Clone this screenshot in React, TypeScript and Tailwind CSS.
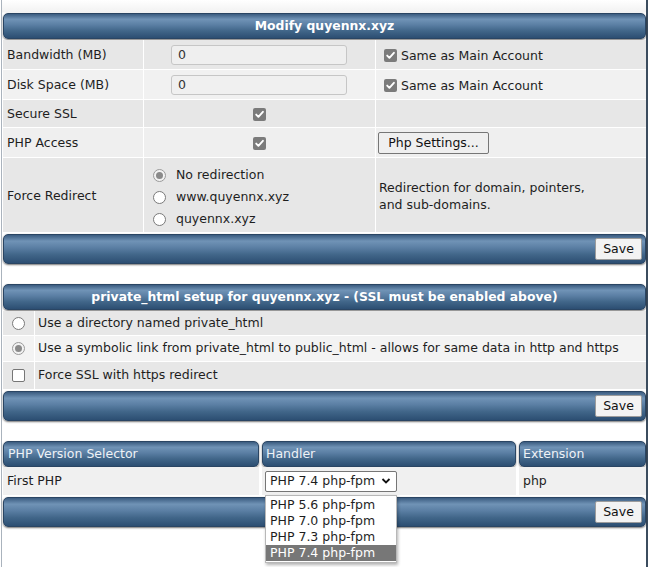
import React from "react";

const bar =
  "rounded-[5px] border border-[#2a4563] bg-[linear-gradient(to_bottom,#3b5c80_0%,#7093b6_22%,#5b7fa4_45%,#416689_70%,#2c4e72_100%)] shadow-[0_1px_2px_rgba(0,0,0,0.55)]";

function Check({ checked = true }: { checked?: boolean }) {
  if (!checked)
    return <span className="inline-block w-[13px] h-[13px] rounded-[2px] border border-[#767676] bg-white shrink-0" />;
  return (
    <span className="inline-flex w-[13px] h-[13px] rounded-[2px] bg-[#7b7b7b] items-center justify-center shrink-0">
      <svg width="11" height="11" viewBox="0 0 11 11">
        <path d="M2.2 5.6 L4.4 7.8 L8.9 2.8" fill="none" stroke="white" strokeWidth="1.9" strokeLinecap="round" strokeLinejoin="round" />
      </svg>
    </span>
  );
}

function Radio({ checked = false }: { checked?: boolean }) {
  if (checked)
    return (
      <span className="inline-flex w-[13px] h-[13px] rounded-full border border-[#9a9a9a] bg-[#f2f2f2] items-center justify-center shrink-0">
        <span className="w-[7px] h-[7px] rounded-full bg-[#8a8a8a]" />
      </span>
    );
  return <span className="inline-block w-[13px] h-[13px] rounded-full border border-[#7a7a7a] bg-white shrink-0" />;
}

function SaveBar() {
  return (
    <div className={`${bar} h-[30px] flex items-center justify-end pr-[3px]`}>
      <button className="h-[22px] w-[47px] bg-[#f3f3f3] border border-[#9c9c9c] rounded-[2px] text-[12.5px] text-[#111] leading-none">
        Save
      </button>
    </div>
  );
}

export default function App() {
  return (
    <div className="w-[648px] h-[567px] overflow-hidden bg-white pl-px font-['DejaVu_Sans',Verdana,sans-serif] text-[12.5px] text-[#1e1e1e]">
      <div className="h-full border-l border-[#aab3bd] border-r-2 border-r-[#3b4c5e] pl-px bg-[linear-gradient(to_bottom,#ffffff_0px,#f2f2f2_12px,#ffffff_13px)]">
        <div className="pt-[13px]">
          {/* Section 1 */}
          <div className={`${bar} h-[26px] flex items-center justify-center text-white font-bold text-[12.4px]`}>Modify quyennx.xyz</div>
          <div className="mt-px grid grid-cols-[140px_231px_1fr] gap-px bg-white">
            <div className="bg-[#e7e7e7] h-[29px] flex items-center pl-[4px] pt-[2px]">Bandwidth (MB)</div>
            <div className="bg-[#e7e7e7] flex items-center pl-[27px] pt-px">
              <div className="w-[176px] h-[20px] border border-[#c6c6c6] rounded-[3px] bg-[#efefef] flex items-center pl-[6px] text-[#333]">0</div>
            </div>
            <div className="bg-[#e7e7e7] flex items-center pl-[8px] gap-[4px] pt-[2px]">
              <Check />
              <span className="pt-[2px]">Same as Main Account</span>
            </div>

            <div className="bg-[#f1f1f1] h-[29px] flex items-center pl-[4px] pt-[2px]">Disk Space (MB)</div>
            <div className="bg-[#f1f1f1] flex items-center pl-[27px] pt-px">
              <div className="w-[176px] h-[20px] border border-[#c6c6c6] rounded-[3px] bg-[#f0f0f0] flex items-center pl-[6px] text-[#333]">0</div>
            </div>
            <div className="bg-[#f1f1f1] flex items-center pl-[8px] gap-[4px] pt-[2px]">
              <Check />
              <span className="pt-[2px]">Same as Main Account</span>
            </div>

            <div className="bg-[#e7e7e7] h-[27px] flex items-center pl-[4px] pt-[2px]">Secure SSL</div>
            <div className="bg-[#e7e7e7] flex items-center justify-center pt-[2px]">
              <Check />
            </div>
            <div className="bg-[#e7e7e7]" />

            <div className="bg-[#efefef] h-[29px] flex items-center pl-[4px] pt-[2px]">PHP Access</div>
            <div className="bg-[#efefef] flex items-center justify-center pt-[2px]">
              <Check />
            </div>
            <div className="bg-[#efefef] flex items-center pl-[2px] pt-px">
              <button className="h-[22px] w-[111px] bg-[#efefef] border border-[#767676] rounded-[2px] text-[12.5px] text-[#111] pt-px">
                Php Settings...
              </button>
            </div>

            <div className="bg-[#e7e7e7] h-[74px] flex items-center pl-[4px] pt-[2px]">Force Redirect</div>
            <div className="bg-[#e7e7e7] flex flex-col justify-center pl-[9px] pt-[5px]">
              <div className="h-[22px] flex items-center gap-[10px]"><Radio checked /><span>No redirection</span></div>
              <div className="h-[22px] flex items-center gap-[10px]"><Radio /><span>www.quyennx.xyz</span></div>
              <div className="h-[22px] flex items-center gap-[10px]"><Radio /><span>quyennx.xyz</span></div>
            </div>
            <div className="bg-[#e7e7e7] flex items-center pl-[3px] leading-[17px] pt-px">
              <div>
                Redirection for domain, pointers,
                <br />
                and sub-domains.
              </div>
            </div>
          </div>
          <div className="mt-[2px]">
            <SaveBar />
          </div>

          {/* Section 2 */}
          <div className={`${bar} mt-[20px] h-[26px] flex items-center justify-center text-white font-bold text-[12.4px]`}>
            private_html setup for quyennx.xyz - (SSL must be enabled above)
          </div>
          <div className="mt-px grid grid-cols-[31px_1fr] gap-px bg-white">
            <div className="bg-[#e7e7e7] h-[24px] flex items-center justify-center"><Radio /></div>
            <div className="bg-[#e7e7e7] flex items-center pl-[3px]">Use a directory named private_html</div>
            <div className="bg-[#f3f3f3] h-[25px] flex items-center justify-center"><Radio checked /></div>
            <div className="bg-[#f3f3f3] flex items-center pl-[3px]">
              Use a symbolic link from private_html to public_html - allows for same data in http and https
            </div>
            <div className="bg-[#e7e7e7] h-[27px] flex items-center justify-center"><Check checked={false} /></div>
            <div className="bg-[#e7e7e7] flex items-center pl-[3px]">Force SSL with https redirect</div>
          </div>
          <div className="mt-[2px]">
            <SaveBar />
          </div>

          {/* Section 3 */}
          <div className="mt-[20px] grid grid-cols-[256px_254px_1fr] gap-x-[3px]">
            <div className={`${bar} h-[26px] flex items-center pl-[4px] text-[#eef2f6]`}>PHP Version Selector</div>
            <div className={`${bar} h-[26px] flex items-center pl-[3px] text-[#eef2f6]`}>Handler</div>
            <div className={`${bar} h-[26px] flex items-center pl-[3px] text-[#eef2f6]`}>Extension</div>
          </div>
          <div className="grid grid-cols-[256px_254px_1fr] gap-x-[3px] bg-white">
            <div className="bg-[#f0f0f0] h-[28px] flex items-center pl-[4px] pt-px">First PHP</div>
            <div className="bg-[#f0f0f0] relative flex items-center pl-[3px]">
              <div className="w-[132px] h-[21px] border border-[#767676] rounded-[2px] bg-white flex items-center pl-[4px] pr-[5px] justify-between">
                <span>PHP 7.4 php-fpm</span>
                <svg width="10" height="8" viewBox="0 0 10 8">
                  <path d="M1.5 2 L5 5.5 L8.5 2" fill="none" stroke="#111" strokeWidth="1.8" />
                </svg>
              </div>
              <div className="absolute left-[3px] top-[28px] z-10 w-[132px] bg-white border border-[#b8b8b8] shadow-[1px_2px_3px_rgba(0,0,0,0.3)] py-px">
                <div className="h-[16px] flex items-center pl-[4px]">PHP 5.6 php-fpm</div>
                <div className="h-[16px] flex items-center pl-[4px]">PHP 7.0 php-fpm</div>
                <div className="h-[16px] flex items-center pl-[4px]">PHP 7.3 php-fpm</div>
                <div className="h-[16px] flex items-center pl-[4px] bg-[#777777] text-white">PHP 7.4 php-fpm</div>
              </div>
            </div>
            <div className="bg-[#f0f0f0] flex items-center pl-[4px] pt-px">php</div>
          </div>
          <div className="mt-[2px]">
            <SaveBar />
          </div>
        </div>
      </div>
    </div>
  );
}
